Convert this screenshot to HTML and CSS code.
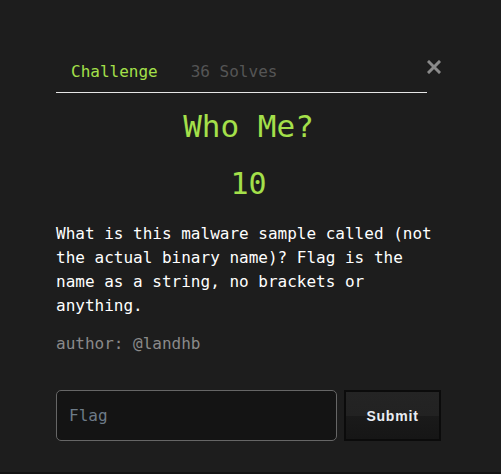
FILE: index.html
```html
<!DOCTYPE html>
<html>
<head>
<meta charset="utf-8">
<link rel="stylesheet" href="styles.css">
</head>
<body>
<div class="modal">
  <button class="close" aria-label="Close">
    <svg width="14" height="14" viewBox="0 0 14 14"><path d="M2 2 L12 12 M12 2 L2 12" stroke="#8a8a8a" stroke-width="3" stroke-linecap="square"/></svg>
  </button>
  <div class="content">
    <nav class="tabs">
      <a class="tab active">Challenge</a>
      <a class="tab">36 Solves</a>
    </nav>
    <h2 class="title">Who Me?</h2>
    <h3 class="value">10</h3>
    <p class="desc">What is this malware sample called (not the actual binary name)? Flag is the name as a string, no brackets or anything.</p>
    <p class="author">author: @landhb</p>
    <form class="submit-row">
      <input class="flag" type="text" placeholder="Flag">
      <button class="submit" type="button">Submit</button>
    </form>
  </div>
</div>
</body>
</html>
```
FILE: styles.css
```css
html, body {
  margin: 0;
  padding: 0;
  background: #1d1d1d;
}
body {
  width: 501px;
  height: 474px;
  overflow: hidden;
  font-family: "DejaVu Sans Mono", "Liberation Mono", monospace;
}
.modal {
  position: relative;
  height: 472px;
  border-bottom: 2px solid #121212;
  background: #1d1d1d;
}
.close {
  position: absolute;
  left: 427px;
  top: 60px;
  width: 14px;
  height: 14px;
  padding: 0;
  border: 0;
  background: none;
  display: block;
}
.close svg { display: block; }
.content {
  width: 385px;
  padding: 60px 0 0 56px;
}
.tabs {
  display: flex;
  width: 371px;
  border-bottom: 1px solid #e6e6e6;
  padding-bottom: 8px;
}
.tab {
  font-size: 16px;
  line-height: 24px;
  padding: 0 16.5px;
  color: #555;
}
.tab:first-child { margin-left: -1.5px; }
.tab.active { color: #a4e04a; }
.title {
  margin: 15px 0 0;
  text-align: center;
  font-weight: normal;
  font-size: 31px;
  line-height: 36px;
  color: #a4e04a;
}
.value {
  margin: 22px 0 0;
  text-align: center;
  font-weight: normal;
  font-size: 30px;
  line-height: 36px;
  color: #a4e04a;
}
.desc {
  margin: 20px 0 0;
  font-size: 16px;
  line-height: 24px;
  color: #ffffff;
}
.author {
  margin: 14px 0 0;
  font-size: 16px;
  line-height: 24px;
  color: #8a8a8a;
}
.submit-row {
  display: flex;
  gap: 7px;
  margin-top: 34px;
}
.flag {
  box-sizing: border-box;
  width: 281px;
  height: 51px;
  margin: 0;
  padding: 0 12px;
  border: 1px solid #666;
  border-radius: 5px;
  background: #141414;
  color: #ddd;
  font-family: "DejaVu Sans Mono", "Liberation Mono", monospace;
  font-size: 16px;
  outline: none;
}
.flag::placeholder { color: #6d7b88; }
.submit {
  box-sizing: border-box;
  width: 97px;
  height: 51px;
  margin: 0;
  border: 2px solid #0b0b0b;
  background: linear-gradient(#242424 0%, #222 50%, #1a1a1a 52%, #161616 100%);
  color: #e9eef4;
  font-family: "Liberation Sans", Arial, sans-serif;
  font-weight: bold;
  font-size: 14px;
  letter-spacing: 0.8px;
  padding: 0;
}
```
